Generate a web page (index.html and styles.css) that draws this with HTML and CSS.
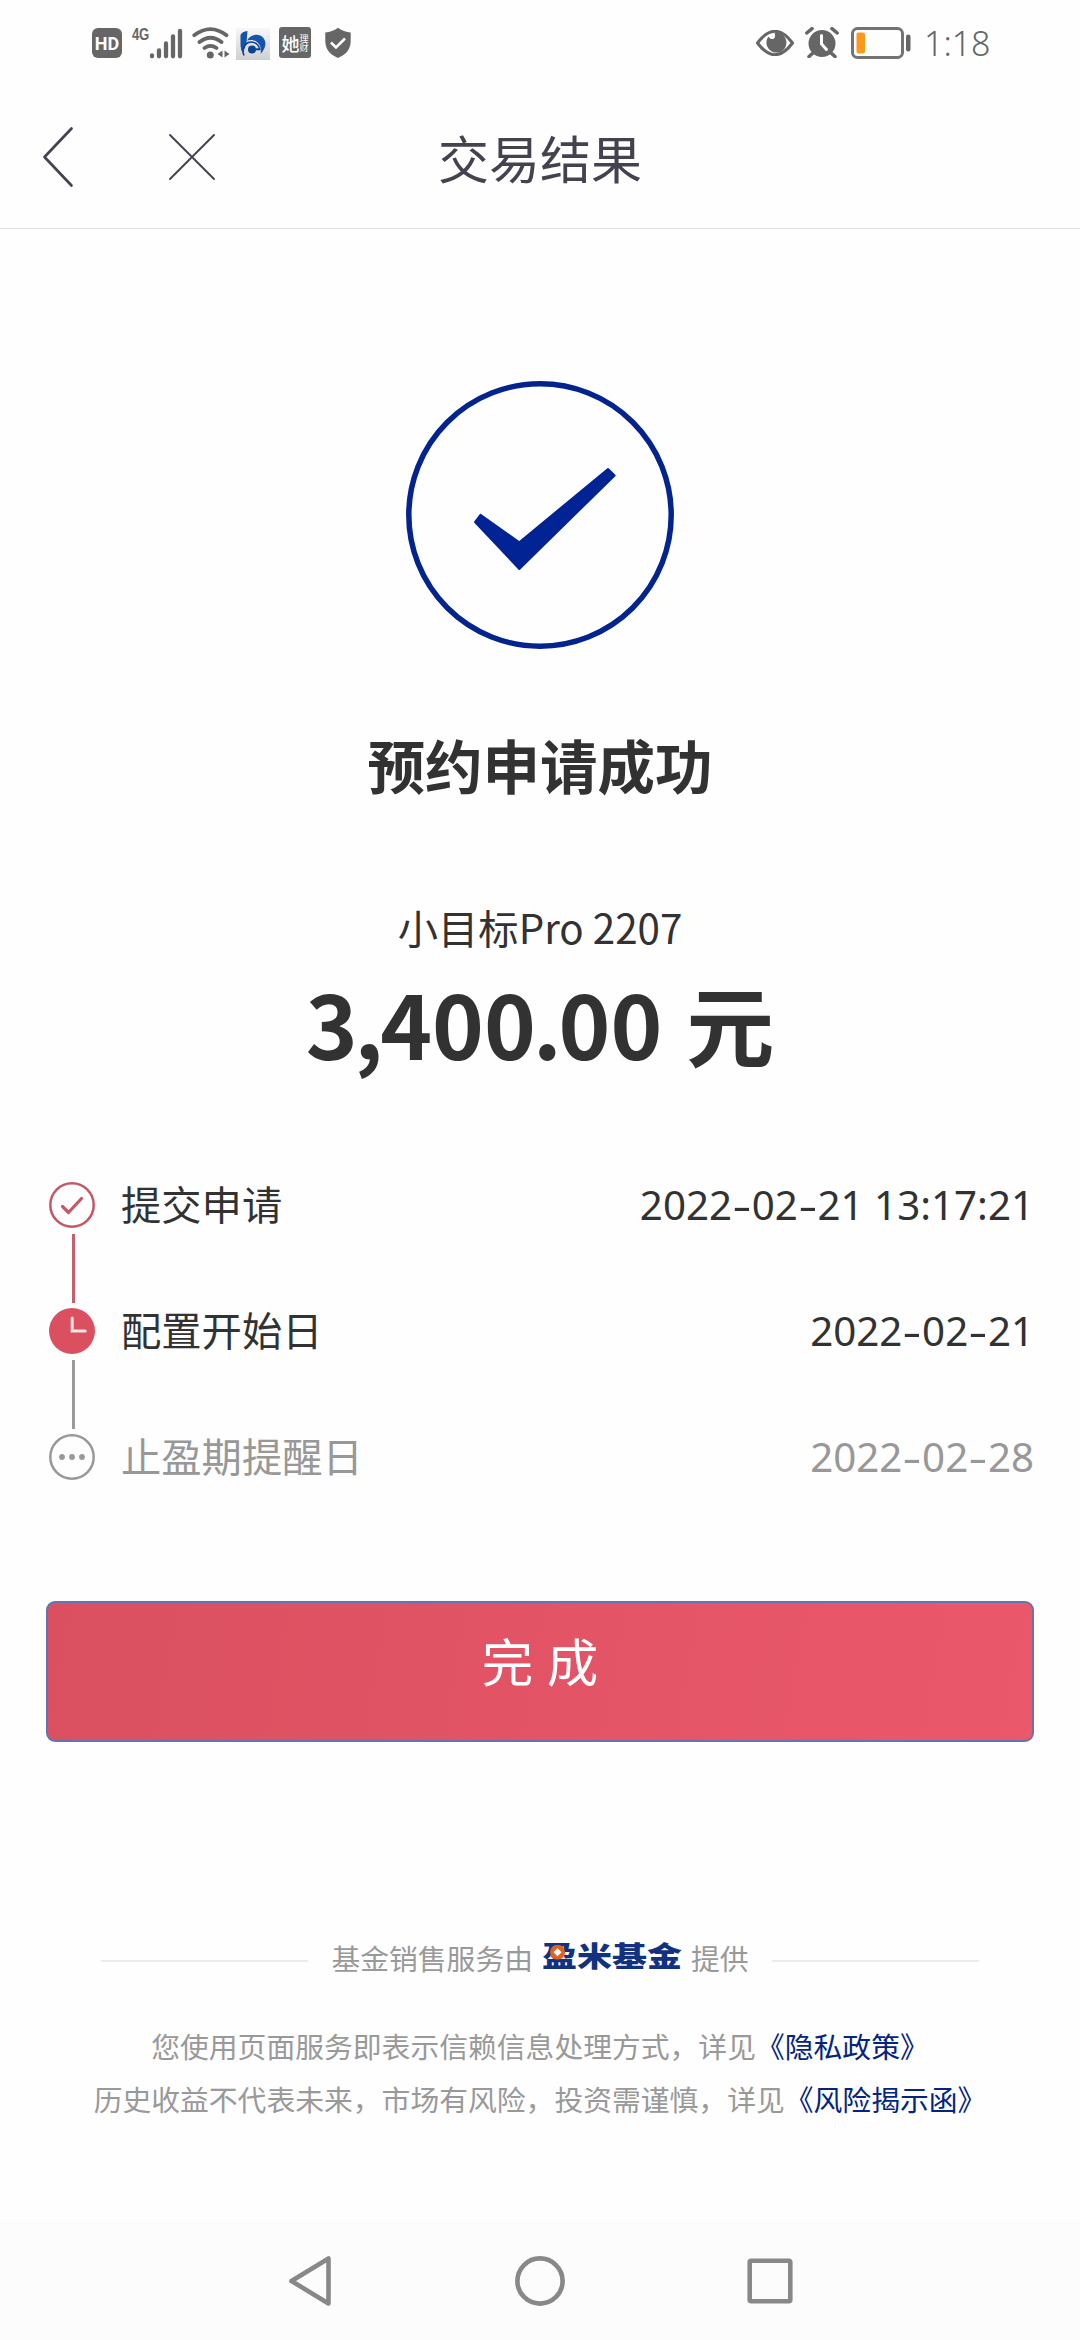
FILE: index.html
```html
<!DOCTYPE html>
<html lang="zh-CN">
<head>
<meta charset="utf-8">
<title>交易结果</title>
<link rel="stylesheet" href="styles.css">
</head>
<body>
<div class="status">
  <div class="status-left">
    <span class="hd">HD</span>
    <div class="signal">
      <span class="net">4G</span>
      <svg width="34" height="31" viewBox="0 0 34 31" fill="none" stroke="#666" stroke-width="4.3" stroke-linecap="round"><path d="M3 27.5v.8M10 22.5v5.8M17 15.500v12.800M24 8.500v19.800M31 3v25.300"/></svg>
    </div>
    <svg class="wifi" width="38" height="32" viewBox="0 0 38 32"><g fill="none" stroke="#666" stroke-width="3.800" stroke-linecap="round"><path d="M2.200 8.200Q18.500-4 34.500 8.200M7.500 15Q18.500 6.500 29.500 15M12.500 21Q18.500 16.800 24.500 21"/></g><circle cx="18.300" cy="28" r="3.500" fill="#666"/><path fill="#666" d="M25.500 27l5-3.500v7zM37.500 27l-5-3.500v7z"/></svg>
    <svg class="app" width="34" height="32" viewBox="0 0 34 32"><defs><linearGradient id="tile" x2="0" y2="1"><stop stop-color="#f7f7f7"/><stop offset="1" stop-color="#cfd0d2"/></linearGradient></defs><path fill="url(#tile)" d="M0 0h34v32H0z"/><path d="M4.500 7Q6 3.500 11.500 3L10.500 15 7 25Q4.500 22 4.500 17z" fill="#1454ac"/><path d="M11 12.500C15 6 23 5 27 9.500c4 4.500 3 11-2.500 16.500 1.500-6-1-12-6.500-13.500-3-.8-5-.5-7 0z" fill="#1454ac"/><path d="M8 27.500C4.500 19 11 12.800 17 14.200c4 1 6 3.500 6.500 6.800" fill="none" stroke="#0d4290" stroke-width="1.600"/><circle cx="16" cy="21.500" r="4" fill="#0d4290"/><path d="M18 21.300h6.500" stroke="#0d4290" stroke-width="2"/></svg>
    <div class="ta"><b>她</b><span>理<br>财</span></div>
    <svg class="shield" width="28" height="32" viewBox="0 0 28 32"><path fill="#666" d="M14 .8C10 4 6 5 1.300 5.500V14c0 8 4.500 13.500 12.700 17C22.200 27.500 26.700 22 26.700 14V5.500C22 5 18 4 14 .8z"/><path fill="none" stroke="#fff" stroke-width="2.600" d="M7 15.500l5 5 9-9"/></svg>
  </div>
  <div class="status-right">
    <svg width="38" height="26" viewBox="0 0 38 26"><path d="M1.500 13Q19-10.500 36.500 13Q19 36.500 1.500 13z" fill="none" stroke="#666" stroke-width="3"/><path fill="#666" d="M12.500 6.500c2.500 4.500 8.500 3 6-3.700A10 10 0 1 1 12.500 6.500z"/></svg>
    <svg class="alarm" width="34" height="31" viewBox="0 0 34 31"><circle cx="17" cy="16.500" r="13.500" fill="#666"/><path d="M1.800 6L7 1.700M32.200 6L27 1.700M8 26l-4 3.500M26 26l4 3.500" stroke="#666" stroke-width="3.500" stroke-linecap="round"/><path d="M16.500 8.500v8.500l5 5.500" fill="none" stroke="#fff" stroke-width="3" stroke-linecap="round"/></svg>
    <svg class="battery" width="60" height="32" viewBox="0 0 60 32"><rect x="1.500" y="1.500" width="50" height="29" rx="5" fill="none" stroke="#737373" stroke-width="3"/><rect x="5.500" y="5.500" width="8.500" height="21" rx="2" fill="#f99a1c"/><rect x="55" y="7.500" width="4.500" height="17" rx="2.200" fill="#666"/></svg>
    <span class="clock">1:18</span>
  </div>
</div>

<header class="bar">
  <svg class="back" width="32" height="62" viewBox="0 0 32 62"><path d="M29.500 2.500L2.500 31l27 28.500" fill="none" stroke="#45434f" stroke-width="2.700" stroke-linejoin="round" stroke-linecap="round"/></svg>
  <svg class="close" width="48" height="48" viewBox="0 0 48 48"><path d="M2 2l44 44M46 2L2 46" stroke="#45434f" stroke-width="1.900" stroke-linecap="round"/></svg>
  <h1>交易结果</h1>
</header>

<main>
  <svg class="success" width="268" height="268" viewBox="0 0 268 268"><circle cx="134" cy="134" r="131.200" fill="none" stroke="#03248f" stroke-width="5.500"/><path d="M69 141l5.500-7.200 38.800 27.400L202 88l6.600 6.500-95.300 93.500z" fill="#022393" stroke="#022393" stroke-width="2" stroke-linejoin="round"/></svg>
  <h2>预约申请成功</h2>
  <p class="fund">小目标Pro 2207</p>
  <p class="amount">3<i>,</i>400<i>.</i>00 元</p>

  <ul class="steps">
    <li>
      <svg width="46" height="46" viewBox="0 0 46 46" fill="none" stroke="#c55866"><circle cx="23" cy="23" r="21.700" stroke-width="2.500"/><path d="M13.500 24.500l6 6 13-14" stroke-width="3.200" stroke-linecap="round" stroke-linejoin="round"/></svg>
      <span>提交申请</span><time>2022<i>-</i>02<i>-</i>21 13:17:21</time>
    </li>
    <li class="link-red">
      <svg width="46" height="46" viewBox="0 0 46 46"><circle cx="23" cy="23" r="23" fill="#db5060"/><path d="M23.200 10v13h13" fill="none" stroke="#f9e4e6" stroke-width="3" stroke-linecap="round"/></svg>
      <span>配置开始日</span><time>2022<i>-</i>02<i>-</i>21</time>
    </li>
    <li class="link-grey pending">
      <svg width="46" height="46" viewBox="0 0 46 46"><circle cx="23" cy="23" r="21.700" fill="none" stroke="#97989a" stroke-width="2.500"/><g fill="#97989a"><circle cx="13" cy="23" r="2.900"/><circle cx="23" cy="23" r="2.900"/><circle cx="33" cy="23" r="2.900"/></g></svg>
      <span>止盈期提醒日</span><time>2022<i>-</i>02<i>-</i>28</time>
    </li>
  </ul>

  <button class="done">完 成</button>

  <footer>
    <div class="provider">
      <span>基金销售服务由</span>
      <span class="logo">盈米基金<svg width="15" height="15" viewBox="0 0 15 15"><circle cx="7.500" cy="7.500" r="7.500" fill="#df6220"/><path d="M7.500 3.500l4 4-4 4-4-4z" fill="#fff"/></svg></span>
      <span>提供</span>
    </div>
    <p>您使用页面服务即表示信赖信息处理方式，详见<a>《隐私政策》</a></p>
    <p>历史收益不代表未来，市场有风险，投资需谨慎，详见<a>《风险揭示函》</a></p>
  </footer>
</main>

<nav>
  <svg width="46" height="54" viewBox="0 0 46 54"><path d="M41.500 4.500v45L4.500 27z"/></svg>
  <svg width="50" height="50" viewBox="0 0 50 50"><circle cx="25" cy="25" r="22.600"/></svg>
  <svg width="46" height="46" viewBox="0 0 46 46"><rect x="2.700" y="2.700" width="40.600" height="40.600" rx="1.500"/></svg>
</nav>
</body>
</html>
```
FILE: styles.css
```css
* { box-sizing: border-box; margin: 0; padding: 0; }
body {
  width: 1080px;
  height: 2340px;
  display: flex;
  flex-direction: column;
  background: #fefefe;
  color: #323232;
  font-family: "Noto Sans CJK SC", sans-serif;
  overflow: hidden;
}
svg { display: block; flex: none; }

.status {
  height: 85px;
  padding: 0 92px 0 92px;
  display: flex;
  justify-content: space-between;
  align-items: center;
  color: #666;
}
.status-left, .status-right { display: flex; align-items: center; }
.hd {
  width: 30px; height: 30px;
  border-radius: 6px;
  background: #666;
  color: #fff;
  font: bold 18px/31px "Roboto", sans-serif;
  text-align: center;
}
.signal { display: flex; align-items: flex-start; margin-left: 10px; height: 32px; }
.signal svg { margin-top: 1px; }
.net { width: 17px; font: bold 16px/16px "Liberation Sans", sans-serif; transform: scaleX(.82); transform-origin: left; letter-spacing: -.3px; }
.wifi { margin-left: 9px; }
.app { margin-left: 6px; margin-top: 2px; }
.ta {
  width: 32px; height: 31px;
  margin-left: 9px;
  display: flex;
  align-items: center;
  justify-content: center;
  background: #666;
  border-radius: 3px;
  color: #fff;
}
.ta b { font-size: 18px; line-height: 20px; font-weight: 500; }
.ta span { font-size: 9px; line-height: 9px; }
.shield { margin-left: 13px; }
.alarm { margin-left: 11px; }
.battery { margin-left: 12px; }
.clock { margin-left: 13px; width: 64px; font: 300 34px/48px "Noto Sans", sans-serif; white-space: nowrap; }

.bar {
  height: 144px;
  padding: 0 42px;
  display: grid;
  grid-template-columns: 126px 1fr 174px;
  align-items: center;
  border-bottom: 1.5px solid #dedede;
}
.bar svg { grid-row: 1; }
.back { grid-column: 1; }
.close { grid-column: 2; }
.bar h1 {
  grid-area: 1 / 1 / 2 / 4;
  text-align: center;
  color: #43424e;
  font-size: 51px;
  line-height: 70px;
  font-weight: 400;
}

main { flex: 1; display: flex; flex-direction: column; align-items: center; padding: 152px 46px 0; }
h2 { margin-top: 75px; font-size: 57.5px; line-height: 80px; }
.fund { margin-top: 93px; font-size: 40.3px; line-height: 60px; }
.amount { margin-top: 10px; font-size: 88px; line-height: 110px; font-weight: 700; word-spacing: 4px; }
.amount i { font-style: normal; margin: 0 -3px; }

.steps { width: 100%; margin-top: 65px; list-style: none; }
.steps li { height: 126px; padding: 0 0 0 3px; display: flex; align-items: center; position: relative; font-size: 40.3px; line-height: 60px; }
.steps span { margin: 0 0 4px 26px; }
time { margin-left: auto; font-family: "Noto Sans", sans-serif; white-space: pre; }
time i { display: inline-block; width: 19.700px; text-align: center; font-style: normal; transform: scaleX(1.45); }
.link-red::before, .link-grey::before {
  content: "";
  position: absolute;
  left: 26px; top: -34px;
  width: 3px; height: 69px;
  background: #c55f6d;
}
.link-grey::before { background: #999a9b; }
.pending { color: #989898; }

.done {
  width: 988px; height: 141px;
  margin-top: 81px;
  padding-bottom: 23px;
  border: 2px solid #6574ae;
  border-radius: 9px;
  background: linear-gradient(100deg, #da5060, #ea586b);
  color: #fff;
  font: 51.500px/70px "Noto Sans CJK SC", sans-serif;
  word-spacing: 2px;
}

footer { margin-top: 185px; width: 100%; color: #999; font-size: 28.800px; text-align: center; }
.provider { display: flex; align-items: center; padding: 0 55px; height: 60px; white-space: nowrap; }
.provider::before, .provider::after { content: ""; flex: 1; height: 2px; margin-top: 7px; background: #ececec; }
.provider::before { margin-right: 23px; }
.provider::after { margin-left: 23px; }
.logo { position: relative; margin: -5px 9px 0; color: #12317f; font-size: 35px; line-height: 40px; font-weight: 900; transform: scaleY(.82); }
.logo svg { position: absolute; left: 8px; top: 9px; transform: scaleY(1.22); }
footer p { line-height: 53px; white-space: nowrap; }
.provider + p { margin-top: 32px; }
a { color: #03247f; }

nav {
  height: 118px;
  background: #fcfcfc;
  display: flex;
  justify-content: center;
  align-items: center;
  gap: 182px;
}
nav svg { fill: none; stroke: #888; stroke-width: 4.600; stroke-linejoin: round; }
```
